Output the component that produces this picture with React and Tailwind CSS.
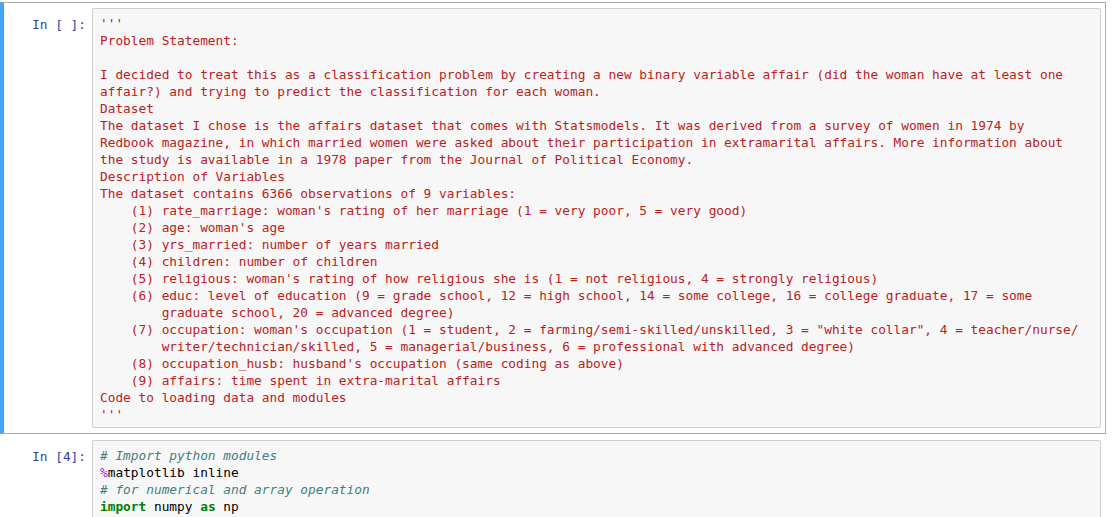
import React from "react";

const mono = { fontFamily: '"DejaVu Sans Mono", "Liberation Mono", monospace' };

const lines1 = [
  "'''",
  "Problem Statement:",
  "",
  "I decided to treat this as a classification problem by creating a new binary variable affair (did the woman have at least one",
  "affair?) and trying to predict the classification for each woman.",
  "Dataset",
  "The dataset I chose is the affairs dataset that comes with Statsmodels. It was derived from a survey of women in 1974 by",
  "Redbook magazine, in which married women were asked about their participation in extramarital affairs. More information about",
  "the study is available in a 1978 paper from the Journal of Political Economy.",
  "Description of Variables",
  "The dataset contains 6366 observations of 9 variables:",
  "    (1) rate_marriage: woman's rating of her marriage (1 = very poor, 5 = very good)",
  "    (2) age: woman's age",
  "    (3) yrs_married: number of years married",
  "    (4) children: number of children",
  "    (5) religious: woman's rating of how religious she is (1 = not religious, 4 = strongly religious)",
  "    (6) educ: level of education (9 = grade school, 12 = high school, 14 = some college, 16 = college graduate, 17 = some",
  "        graduate school, 20 = advanced degree)",
  "    (7) occupation: woman's occupation (1 = student, 2 = farming/semi-skilled/unskilled, 3 = \"white collar\", 4 = teacher/nurse/",
  "        writer/technician/skilled, 5 = managerial/business, 6 = professional with advanced degree)",
  "    (8) occupation_husb: husband's occupation (same coding as above)",
  "    (9) affairs: time spent in extra-marital affairs",
  "Code to loading data and modules",
  "'''",
];

function Line({ children }) {
  return <div className="h-[17px] leading-[17px] whitespace-pre pl-[7px]">{children}</div>;
}

export default function App() {
  return (
    <div className="w-[1112px] h-[517px] overflow-hidden bg-white pt-[2px] text-[12.8px]" style={mono}>
      {/* Cell 1 (selected) */}
      <div className="w-[1106px] flex border border-[#ababab] border-l-[4px] border-l-[#42a5f5] py-[5px] pr-[4px]">
        <div className="w-[88px] shrink-0 text-right pr-[6px] pt-[8px] h-[17px] leading-[17px] text-[#303f9f] whitespace-pre">
          In [ ]:
        </div>
        <div className="flex-1 bg-[#f7f7f7] border border-[#cfcfcf] rounded-[2px] pt-[6px] pb-[4px] text-[#ba2121]">
          {lines1.map((l, i) => (
            <Line key={i}>{l}</Line>
          ))}
        </div>
      </div>

      {/* Cell 2 */}
      <div className="w-[1106px] flex border border-transparent border-l-[4px] py-[5px] pr-[4px]">
        <div className="w-[88px] shrink-0 text-right pr-[6px] pt-[8px] h-[17px] leading-[17px] text-[#303f9f] whitespace-pre">
          In [4]:
        </div>
        <div className="flex-1 h-[200px] bg-[#f7f7f7] border border-[#cfcfcf] rounded-[2px] pt-[6px] pb-[4px] text-black">
          <Line>
            <span className="italic text-[#408080]"># Import python modules</span>
          </Line>
          <Line>
            <span className="text-[#aa22ff]">%</span>matplotlib inline
          </Line>
          <Line>
            <span className="italic text-[#408080]"># for numerical and array operation</span>
          </Line>
          <Line>
            <span className="font-bold text-[#008000]">import</span> numpy <span className="font-bold text-[#008000]">as</span> np
          </Line>
        </div>
      </div>
    </div>
  );
}
